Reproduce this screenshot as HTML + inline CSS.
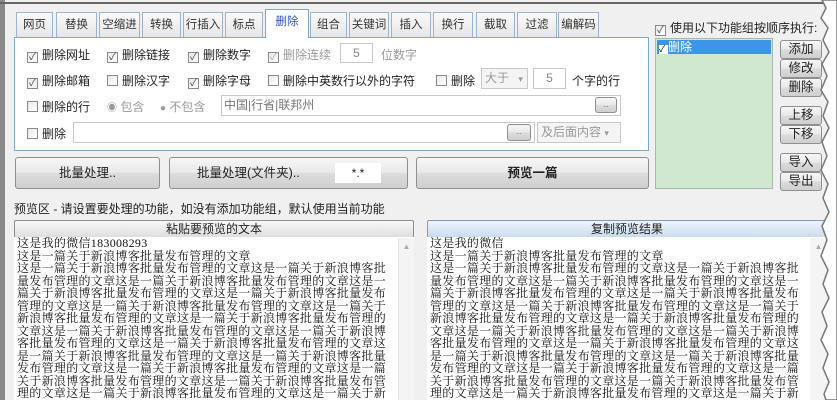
<!DOCTYPE html>
<html><head><meta charset="utf-8"><style>
*{box-sizing:border-box;margin:0;padding:0}
body{width:837px;height:400px;overflow:hidden;background:#f0f0f0;position:relative;font-family:"Liberation Sans","Noto Sans CJK SC","WenQuanYi Zen Hei",sans-serif;font-size:12px;color:#222}
.a{position:absolute;white-space:nowrap}
.tab{position:absolute;top:12px;height:25px;border:1px solid #9fb3c8;border-bottom:none;background:linear-gradient(#fafafa,#e6e6e6);font-size:11.5px;text-align:center;line-height:24px;color:#333}
.cb{display:inline-block;width:11px;height:11px;border:1px solid #8a8a8a;background:linear-gradient(135deg,#e8e8e8,#fff);vertical-align:-1px;margin-right:4px;position:relative;font-size:10px;line-height:9px;text-align:center;color:#444}
.btn{position:absolute;border:1px solid #8e8f8f;border-radius:3px;background:linear-gradient(#f6f6f6 0%,#e9e9e9 48%,#dcdcdc 52%,#cfcfcf 100%);text-align:center;color:#222}
.inp{position:absolute;background:#fff;border:1px solid #c8c8c8}
.txt{position:absolute;background:#fff;font-family:"Liberation Serif","Noto Serif CJK SC",serif;font-size:12px;line-height:12.5px;letter-spacing:.3px;white-space:pre;overflow:hidden;color:#111}
.dis{color:#999}
</style></head><body>
<div class="a" style="left:0;top:0;width:5px;height:400px;background:#8a8a8a"></div>
<div class="a" style="left:0;top:2px;width:837px;height:2px;background:#666"></div>

<div class="tab" style="left:16px;width:37px">网页</div>
<div class="tab" style="left:56px;width:41px">替换</div>
<div class="tab" style="left:99px;width:41px">空缩进</div>
<div class="tab" style="left:142px;width:39px">转换</div>
<div class="tab" style="left:183px;width:40px">行插入</div>
<div class="tab" style="left:225px;width:38px">标点</div>
<div class="tab" style="left:265px;top:9px;height:29px;width:44px;background:#fff;color:#3050c0;z-index:2;border-color:#7fa9c9">删除</div>
<div class="tab" style="left:310px;width:37px">组合</div>
<div class="tab" style="left:349px;width:40px">关键词</div>
<div class="tab" style="left:391px;width:40px">插入</div>
<div class="tab" style="left:433px;width:40px">换行</div>
<div class="tab" style="left:476px;width:39px">截取</div>
<div class="tab" style="left:517px;width:40px">过滤</div>
<div class="tab" style="left:558px;width:41px">编解码</div>

<div class="a" style="left:14px;top:37px;width:635px;height:114px;background:#fff;border:1px solid #7fa9c9"></div>

<div class="a" style="left:27px;top:46px"><span class="cb">✓</span>删除网址</div>
<div class="a" style="left:107px;top:46px"><span class="cb">✓</span>删除链接</div>
<div class="a" style="left:188px;top:46px"><span class="cb">✓</span>删除数字</div>
<div class="a dis" style="left:268px;top:46px"><span class="cb" style="color:#aaa">✓</span>删除连续</div>
<div class="inp" style="left:340px;top:43px;width:33px;height:20px;text-align:center;line-height:18px;color:#888">5</div>
<div class="a dis" style="left:381px;top:46px">位数字</div>

<div class="a" style="left:27px;top:72px"><span class="cb">✓</span>删除邮箱</div>
<div class="a" style="left:107px;top:72px"><span class="cb"></span>删除汉字</div>
<div class="a" style="left:188px;top:72px"><span class="cb">✓</span>删除字母</div>
<div class="a" style="left:268px;top:72px"><span class="cb"></span>删除中英数行以外的字符</div>
<div class="a" style="left:436px;top:72px"><span class="cb"></span>删除</div>
<div class="inp" style="left:481px;top:68px;width:47px;height:21px;line-height:19px;padding-left:3px;color:#999;background:#f4f4f4">大于 <span style="font-size:9px;margin-left:6px">▾</span></div>
<div class="inp" style="left:533px;top:68px;width:33px;height:21px;text-align:center;line-height:19px;color:#888">5</div>
<div class="a" style="left:572px;top:72px">个字的行</div>

<div class="a" style="left:27px;top:98px"><span class="cb"></span>删除的行</div>
<div class="a dis" style="left:107px;top:98px"><span style="font-size:10px">◉</span> 包含</div>
<div class="a dis" style="left:160px;top:98px"><span style="font-size:10px">●</span> 不包含</div>
<div class="inp" style="left:221px;top:95px;width:400px;height:21px;line-height:19px;padding-left:2px;color:#777">中国|行省|联邦州</div>
<div class="btn" style="left:595px;top:97px;width:22px;height:16px;font-size:9px;line-height:12px;color:#777">..</div>

<div class="a" style="left:27px;top:125px"><span class="cb"></span>删除</div>
<div class="inp" style="left:73px;top:122px;width:462px;height:21px"></div>
<div class="btn" style="left:507px;top:124px;width:24px;height:17px;font-size:9px;line-height:12px;color:#777">..</div>
<div class="inp" style="left:537px;top:122px;width:84px;height:21px;line-height:19px;padding-left:3px;color:#999;background:#f4f4f4">及后面内容 <span style="font-size:9px">▾</span></div>

<div class="btn" style="left:15px;top:157px;width:145px;height:32px;line-height:30px;font-size:12.5px">批量处理..</div>
<div class="btn" style="left:169px;top:157px;width:239px;height:32px;line-height:30px;font-size:12.5px;text-align:left;padding-left:27px">批量处理(文件夹)..</div>
<div class="a" style="left:335px;top:163px;width:46px;height:20px;background:#fff;text-align:center;line-height:20px">*.*</div>
<div class="btn" style="left:416px;top:157px;width:233px;height:32px;line-height:30px;font-size:12.5px;font-weight:bold">预览一篇</div>

<div class="a" style="left:655px;top:19px"><span class="cb">✓</span>使用以下功能组按顺序执行:</div>
<div class="a" style="left:655px;top:38px;width:118px;height:151px;background:#cfe8cf;border:1px solid #a8b8a8"></div>
<div class="a" style="left:657px;top:40px;width:114px;height:14px;background:#3d95ea;color:#fff;line-height:14px;padding-left:2px"><span style="display:inline-block;width:9px;height:9px;background:#fff;color:#000;font-size:9px;line-height:9px;vertical-align:-1px">✓</span>删除</div>

<div class="btn" style="left:780px;top:40px;width:42px;height:19px;line-height:17px;font-size:12.5px">添加</div>
<div class="btn" style="left:780px;top:59px;width:42px;height:19px;line-height:17px;font-size:12.5px">修改</div>
<div class="btn" style="left:780px;top:78px;width:42px;height:19px;line-height:17px;font-size:12.5px">删除</div>
<div class="btn" style="left:780px;top:106px;width:42px;height:19px;line-height:17px;font-size:12.5px">上移</div>
<div class="btn" style="left:780px;top:125px;width:42px;height:19px;line-height:17px;font-size:12.5px">下移</div>
<div class="btn" style="left:780px;top:153px;width:42px;height:19px;line-height:17px;font-size:12.5px">导入</div>
<div class="btn" style="left:780px;top:172px;width:42px;height:19px;line-height:17px;font-size:12.5px">导出</div>

<div class="a" style="left:14px;top:200px">预览区 - 请设置要处理的功能，如没有添加功能组，默认使用当前功能</div>

<div class="btn" style="left:14px;top:220px;width:400px;height:18px;line-height:16px;border-radius:2px;background:linear-gradient(#f8f8f8,#dedede)">粘贴要预览的文本</div>
<div class="btn" style="left:427px;top:220px;width:400px;height:18px;line-height:16px;border-radius:2px;background:linear-gradient(#eef4fa,#c9dcee);border-color:#7f9db9">复制预览结果</div>

<div class="txt" style="left:14px;top:237px;width:400px;height:163px;padding-left:3px">这是我的微信183008293
这是一篇关于新浪博客批量发布管理的文章
这是一篇关于新浪博客批量发布管理的文章这是一篇关于新浪博客批
量发布管理的文章这是一篇关于新浪博客批量发布管理的文章这是一
篇关于新浪博客批量发布管理的文章这是一篇关于新浪博客批量发布
管理的文章这是一篇关于新浪博客批量发布管理的文章这是一篇关于
新浪博客批量发布管理的文章这是一篇关于新浪博客批量发布管理的
文章这是一篇关于新浪博客批量发布管理的文章这是一篇关于新浪博
客批量发布管理的文章这是一篇关于新浪博客批量发布管理的文章这
是一篇关于新浪博客批量发布管理的文章这是一篇关于新浪博客批量
发布管理的文章这是一篇关于新浪博客批量发布管理的文章这是一篇
关于新浪博客批量发布管理的文章这是一篇关于新浪博客批量发布管
理的文章这是一篇关于新浪博客批量发布管理的文章这是一篇关于新</div>
<div class="a" style="left:398px;top:238px;width:16px;height:162px;background:#f4f4f4;border-left:1px solid #e4e4e4;text-align:center;font-size:8px;color:#aaa;line-height:18px">▲</div>

<div class="txt" style="left:427px;top:237px;width:400px;height:163px;padding-left:3px">这是我的微信
这是一篇关于新浪博客批量发布管理的文章
这是一篇关于新浪博客批量发布管理的文章这是一篇关于新浪博客批
量发布管理的文章这是一篇关于新浪博客批量发布管理的文章这是一
篇关于新浪博客批量发布管理的文章这是一篇关于新浪博客批量发布
管理的文章这是一篇关于新浪博客批量发布管理的文章这是一篇关于
新浪博客批量发布管理的文章这是一篇关于新浪博客批量发布管理的
文章这是一篇关于新浪博客批量发布管理的文章这是一篇关于新浪博
客批量发布管理的文章这是一篇关于新浪博客批量发布管理的文章这
是一篇关于新浪博客批量发布管理的文章这是一篇关于新浪博客批量
发布管理的文章这是一篇关于新浪博客批量发布管理的文章这是一篇
关于新浪博客批量发布管理的文章这是一篇关于新浪博客批量发布管
理的文章这是一篇关于新浪博客批量发布管理的文章这是一篇关于新</div>
<div class="a" style="left:810px;top:238px;width:17px;height:162px;background:#f4f4f4;text-align:center;font-size:8px;color:#aaa;line-height:18px">▲</div>

<svg class="a" style="left:810px;top:0" width="27" height="400" viewBox="0 0 27 400">
<polygon fill="#fff" stroke="#777" stroke-width="1.5" points="27,0 12,0 16,8 11,18 18,28 13,40 19,52 12,64 17,76 11,90 18,102 13,116 19,128 12,142 17,156 11,170 18,184 13,198 19,212 12,226 17,240 11,256 18,270 13,284 19,298 12,312 17,326 11,340 18,354 13,368 19,382 14,394 16,400 27,400"/>
</svg>
</body></html>
